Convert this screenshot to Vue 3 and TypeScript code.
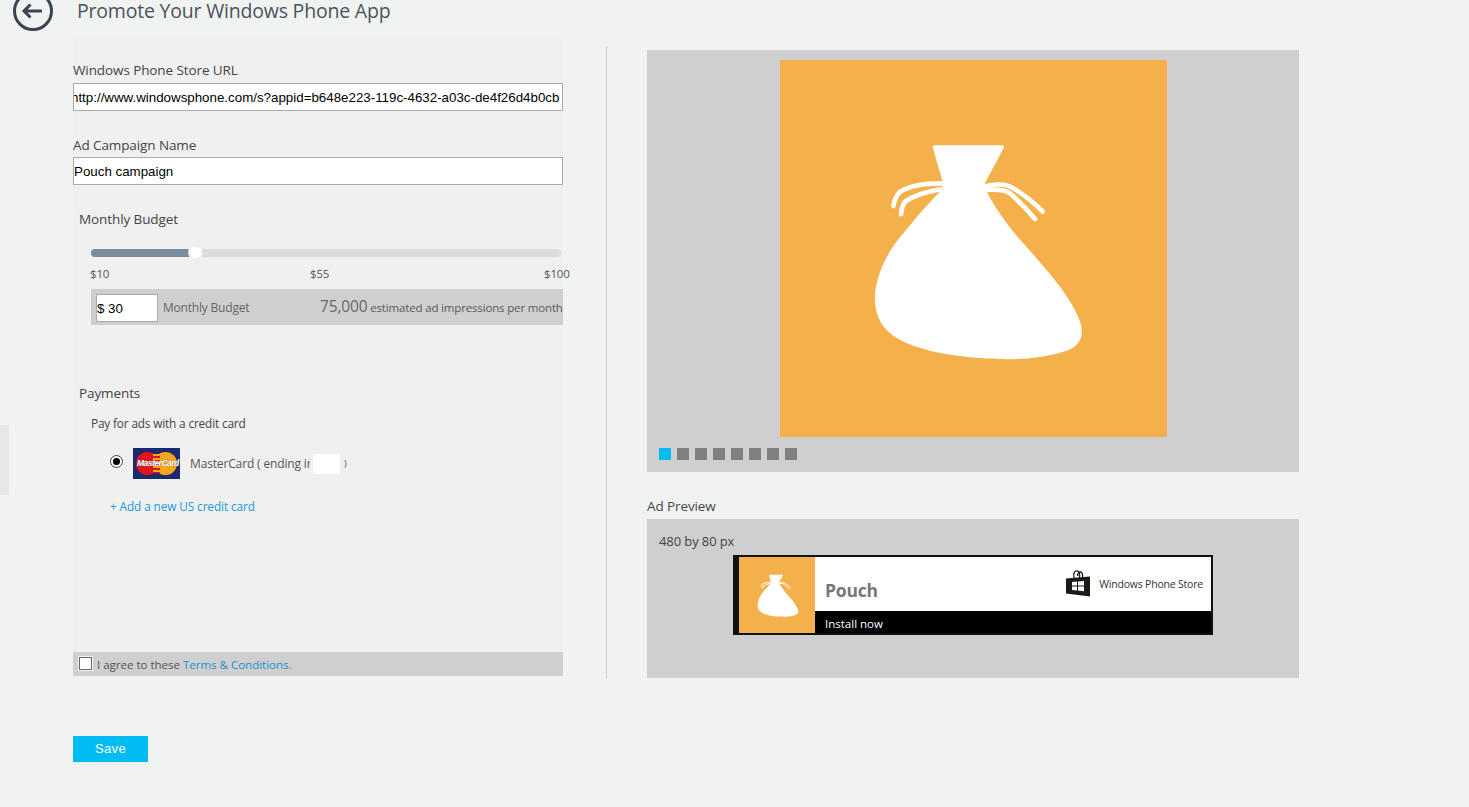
<script setup lang="ts">
const url = 'http://www.windowsphone.com/s?appid=b648e223-119c-4632-a03c-de4f26d4b0cb'
const bagBody = 'M248 52Q248 46 254 46L456 46Q464 46 461 54L402 165C425 225 480 295 520 340C600 430 670 510 692 580C705 630 680 655 640 665C560 690 470 690 400 685C300 678 180 660 120 610C85 580 72 540 75 490C85 410 125 350 160 310C200 260 240 215 275 180L278 155Z'
const bagStrings = [
  'M275 160Q190 160 150 185Q135 200 130 228',
  'M270 178Q200 190 165 215Q155 230 153 253',
  'M400 170Q460 155 490 175Q540 205 578 245',
  'M405 180Q460 175 480 190Q520 225 555 267',
]
const dots = [0, 1, 2, 3, 4, 5, 6, 7]
</script>

<template>
  <div class="page">
    <header class="head">
      <svg class="back" viewBox="0 0 40 40" width="40" height="40" aria-hidden="true">
        <circle cx="20" cy="20" r="18.500" fill="none" stroke="#3a4452" stroke-width="3" />
        <path d="M11 20H29M17.500 13.500L11 20L17.500 26.500" fill="none" stroke="#3a4452" stroke-width="3" />
      </svg>
      <h1 class="title">Promote Your Windows Phone App</h1>
    </header>

    <main class="body">
      <section class="left">
        <label class="label first">Windows Phone Store URL</label>
        <input class="field url" type="text" :value="url" />
        <label class="label second">Ad Campaign Name</label>
        <input class="field" type="text" value="Pouch campaign" />

        <h2 class="sub budget-title">Monthly Budget</h2>
        <div class="budget">
          <div class="track">
            <div class="fill"></div>
            <div class="thumb"></div>
          </div>
          <div class="ticks"><span>$10</span><span>$55</span><span>$100</span></div>
          <div class="strip">
            <input class="amount" type="text" value="$ 30" />
            <span class="strip-label">Monthly Budget</span>
            <span class="estimate"><b>75,000</b> estimated ad impressions per month</span>
          </div>
        </div>

        <h2 class="sub pay-title">Payments</h2>
        <div class="pay">
          <p class="pay-note">Pay for ads with a credit card</p>
          <div class="card-row">
            <span class="radio"><i></i></span>
            <span class="mc">
              <i class="red"></i><i class="yellow"></i><i class="bars"></i>
              <em>MasterCard</em>
            </span>
            <span class="card-name">MasterCard ( ending ir</span>
            <span class="mask"></span>
            <span class="paren">)</span>
          </div>
          <a class="add" href="#">+ Add a new US credit card</a>
        </div>

        <div class="agree">
          <span class="check"></span>
          <span>I agree to these <a href="#">Terms &amp; Conditions.</a></span>
        </div>
      </section>

      <div class="divider"></div>

      <section class="right">
        <div class="gallery">
          <div class="tile big">
            <svg viewBox="0 0 1161 1131" aria-hidden="true">
              <g transform="translate(210 210)">
                <path :d="bagBody" fill="#fff" />
                <path v-for="s in bagStrings" :key="s" :d="s" fill="none" stroke="#fff" stroke-width="14" stroke-linecap="round" />
              </g>
            </svg>
          </div>
          <div class="dots">
            <span v-for="d in dots" :key="d" class="dot" :class="{ on: d === 0 }"></span>
          </div>
        </div>

        <h2 class="preview-title">Ad Preview</h2>
        <div class="preview">
          <p class="size">480 by 80 px</p>
          <div class="ad">
            <div class="tile small">
              <svg viewBox="0 0 1161 1131" aria-hidden="true">
                <g transform="translate(210 210)">
                  <path :d="bagBody" fill="#fff" />
                  <path v-for="s in bagStrings" :key="s" :d="s" fill="none" stroke="#fff" stroke-width="14" stroke-linecap="round" />
                </g>
              </svg>
            </div>
            <div class="ad-main">
              <div class="ad-top">
                <span class="app">Pouch</span>
                <span class="store">
                  <svg viewBox="0 0 24 27" width="24" height="27" aria-hidden="true">
                    <path d="M8 8C7 2 9 .8 11 .8S14 3 13.500 8M11.500 6C11.500 3 13 2 14.500 2S17 4 16.500 8" fill="none" stroke="#1a1a1a" stroke-width="1.300" />
                    <path d="M0 8.500L24 6.500V26.500L0 23.500Z" fill="#1a1a1a" />
                    <path d="M6 12L11 11.500V15.500H6ZM12 11.400L18 10.900V15.500H12ZM6 16.500H11V20.500L6 20ZM12 16.500H18V21.200L12 20.600Z" fill="#fff" />
                  </svg>
                  <span>Windows Phone Store</span>
                </span>
              </div>
              <div class="ad-bottom">Install now</div>
            </div>
          </div>
        </div>
      </section>
    </main>

    <button class="save" type="button">Save</button>

    <div class="edge"></div>
  </div>
</template>

<style>
html, body { margin: 0; background: #f1f3f3; }
</style>

<style scoped>
.page {
  position: relative;
  height: 807px;
  overflow: hidden;
  background: #f1f3f3;
  font-family: "Open Sans", "Noto Sans", sans-serif;
  color: #444;
}
.head {
  display: flex;
  height: 37px;
  padding-left: 13px;
}
.back { margin-top: -9px; flex: none; }
.title {
  margin: 0 0 0 24px;
  font-size: 19.500px;
  line-height: 22px;
  font-weight: 400;
  color: #4a535c;
  letter-spacing: -.2px;
}
.body {
  display: flex;
  align-items: flex-start;
  padding-left: 73px;
}
.left {
  width: 490px;
  height: 641px;
  background: #f0f0f0;
  display: flex;
  flex-direction: column;
}
.label { font-size: 13.500px; line-height: 18px; color: #444; letter-spacing: -.1px; }
.first { margin-top: 24px; margin-bottom: 4px; }
.second { margin-top: 25px; margin-bottom: 3px; }
.field {
  box-sizing: border-box;
  width: 490px;
  height: 28px;
  border: 1px solid #aaa;
  background: #fff;
  font: 13.333px "Liberation Sans", Arial, sans-serif;
  color: #000;
  padding: 0;
  outline: none;
}
.url { text-indent: -3px; }
.sub {
  margin: 0;
  font-size: 13.500px;
  line-height: 18px;
  font-weight: 400;
  padding-left: 6px;
  letter-spacing: -.1px;
}
.budget-title { margin-top: 25px; }
.budget { padding: 21px 0 0 18px; }
.track {
  position: relative;
  width: 470px;
  height: 8px;
  border-radius: 4px;
  background: #dcdcdc;
}
.fill {
  width: 98px;
  height: 8px;
  border-radius: 4px 0 0 4px;
  background: #7a8b9c;
}
.thumb {
  position: absolute;
  left: 97px;
  top: -4px;
  width: 15px;
  height: 15px;
  border-radius: 50%;
  background: #fff;
  border: 1px solid #e4e4e4;
  box-sizing: border-box;
}
.ticks {
  display: grid;
  grid-template-columns: 220px 234px auto;
  margin: 9px 0 0 -1px;
  font-size: 11.500px;
  line-height: 16px;
  color: #555;
  letter-spacing: -.2px;
}
.strip {
  display: flex;
  align-items: center;
  width: 472px;
  height: 36px;
  margin-top: 7px;
  background: #cfcfcf;
  overflow: hidden;
  white-space: nowrap;
}
.amount {
  box-sizing: border-box;
  flex: none;
  width: 62px;
  height: 28px;
  margin: 2px 0 0 5px;
  padding: 0;
  border: 1px solid #aaa;
  background: #fff;
  font: 13.333px "Liberation Sans", Arial, sans-serif;
  color: #000;
  outline: none;
}
.strip-label {
  margin-left: 5px;
  font-size: 12px;
  color: #666;
  letter-spacing: -.2px;
  flex: none;
  width: 157px;
}
.estimate { font-size: 11.500px; color: #5a5a5a; letter-spacing: -.16px; flex: none; margin-top: -3px; }
.estimate b { font-weight: 400; font-size: 15.500px; color: #666; }
.pay-title { margin-top: 59px; }
.pay { padding-left: 18px; }
.pay-note {
  margin: 13px 0 0;
  font-size: 11.800px;
  line-height: 16px;
  letter-spacing: -.15px;
}
.card-row {
  display: flex;
  align-items: center;
  height: 31px;
  margin: 17px 0 0 19px;
  font-size: 12px;
  letter-spacing: -.15px;
}
.radio {
  box-sizing: border-box;
  flex: none;
  width: 13px;
  height: 13px;
  margin: -5px 0 0 0;
  border: 1px solid #444;
  border-radius: 50%;
  background: #f8f8f8;
  display: flex;
  align-items: center;
  justify-content: center;
}
.radio i { width: 7px; height: 7px; border-radius: 50%; background: #000; }
.mc {
  position: relative;
  flex: none;
  width: 47px;
  height: 31px;
  margin-left: 10px;
  background: #1a2a6c;
  overflow: hidden;
}
.mc i { position: absolute; top: 4px; width: 23px; height: 23px; border-radius: 50%; }
.mc .red { left: 3px; background: #e0131f; }
.mc .yellow { left: 21px; background: #f5a81c; }
.mc .bars {
  left: 20px;
  top: 6px;
  width: 7px;
  height: 19px;
  border-radius: 0;
  background: repeating-linear-gradient(#f5a81c 0 2px, #e0131f 2px 4px);
}
.mc em {
  position: absolute;
  left: 4px;
  top: 9px;
  font: italic 700 8.500px/12px "Liberation Sans", Arial, sans-serif;
  letter-spacing: -.5px;
  color: #fff;
  text-shadow: 0 0 1px #555;
}
.card-name { margin: -1px 0 0 10px; flex: none; width: 120px; overflow: hidden; white-space: nowrap; color: #555; }
.mask { flex: none; width: 27px; height: 20px; margin-left: 3px; background: #fff; }
.paren { margin-left: 4px; font-size: 9px; color: #555; }
.add {
  display: block;
  margin: 19px 0 0 19px;
  font-size: 11.800px;
  line-height: 16px;
  color: #1a9ad6;
  text-decoration: none;
  letter-spacing: -.1px;
}
.agree {
  display: flex;
  align-items: center;
  height: 24px;
  margin-top: auto;
  margin-bottom: 2px;
  background: #cfcfcf;
  font-size: 11.500px;
  color: #555;
}
.agree > span:last-child { margin-top: 1px; }
.agree a { color: #1a8fcb; text-decoration: none; }
.check {
  box-sizing: border-box;
  flex: none;
  width: 13px;
  height: 13px;
  margin: -1px 5px 0 6px;
  border: 1px solid #666;
  background: #fff;
  outline: 1px solid #f4f4f4;
}
.divider {
  flex: none;
  width: 1px;
  height: 632px;
  margin: 9px 40px 0 43px;
  background: #c9c9c9;
}
.right { width: 652px; margin-top: 13px; }
.gallery {
  height: 422px;
  background: #cfcfcf;
  padding-top: 10px;
  box-sizing: border-box;
}
.tile { background: #f4b04a; }
.tile svg { display: block; width: 100%; height: 100%; }
.big { width: 387px; height: 377px; margin-left: 133px; }
.dots { display: flex; gap: 6px; margin: 11px 0 0 12px; }
.dot { width: 12px; height: 12px; background: #808080; }
.dot.on { background: #00bcf2; }
.preview-title {
  margin: 25px 0 0;
  font-size: 13.500px;
  line-height: 18px;
  font-weight: 400;
  height: 22px;
  letter-spacing: -.1px;
}
.preview { height: 159px; background: #cfcfcf; padding-top: 13px; box-sizing: border-box; }
.size { margin: 0 0 5px 12px; font-size: 13px; line-height: 18px; letter-spacing: -.1px; }
.ad {
  box-sizing: border-box;
  display: flex;
  width: 480px;
  height: 80px;
  margin-left: 86px;
  border: 2px solid #111;
  border-left-width: 6px;
  background: #000;
}
.small { flex: none; width: 76px; height: 76px; }
.ad-main { flex: 1; display: flex; flex-direction: column; }
.ad-top {
  position: relative;
  height: 54px;
  background: #fff;
  display: flex;
  justify-content: space-between;
}
.app { margin: 21px 0 0 10px; font-size: 17.500px; line-height: 24px; font-weight: 700; color: #777; letter-spacing: -.2px; }
.store {
  display: flex;
  align-items: center;
  gap: 9px;
  height: 27px;
  margin: 13px 8px 0 0;
  font-size: 10.500px;
  color: #333;
  letter-spacing: -.2px;
}
.ad-bottom { flex: 1; padding: 5px 0 0 10px; font-size: 11.500px; line-height: 16px; color: #fff; overflow: hidden; }
.save {
  display: block;
  width: 75px;
  height: 26px;
  margin: 58px 0 0 73px;
  border: 0;
  padding: 0 0 2px;
  background: #00bcf2;
  color: #fff;
  font: 13px "Liberation Sans", Arial, sans-serif;
  letter-spacing: .4px;
}
.edge {
  position: absolute;
  left: 0;
  top: 425px;
  width: 9px;
  height: 70px;
  background: #e6e8e8;
}
</style>
